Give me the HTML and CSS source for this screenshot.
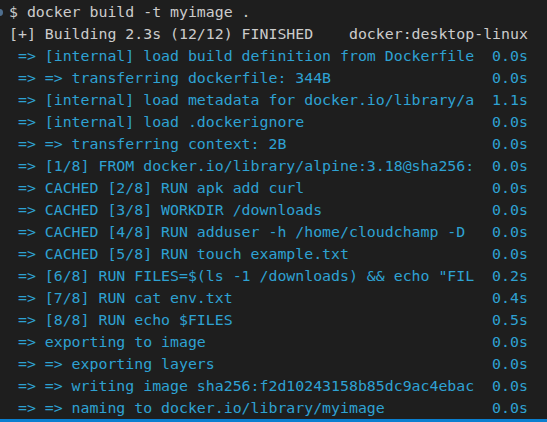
FILE: index.html
```html
<html>
<head>
    <link rel="stylesheet" href="styles.css">
</head>
<body>
    <main class="terminal">
        <div class="row prompt"><span class="msg">$ docker build -t myimage .</span></div>
        <div class="row plain"><span class="msg">[+] Building 2.3s (12/12) FINISHED    docker:desktop-linux</span></div>
        <div class="row"><span class="msg"> =&gt; [internal] load build definition from Dockerfile</span><span class="time">0.0s</span></div>
        <div class="row"><span class="msg"> =&gt; =&gt; transferring dockerfile: 344B</span><span class="time">0.0s</span></div>
        <div class="row"><span class="msg"> =&gt; [internal] load metadata for docker.io/library/a</span><span class="time">1.1s</span></div>
        <div class="row"><span class="msg"> =&gt; [internal] load .dockerignore</span><span class="time">0.0s</span></div>
        <div class="row"><span class="msg"> =&gt; =&gt; transferring context: 2B</span><span class="time">0.0s</span></div>
        <div class="row"><span class="msg"> =&gt; [1/8] FROM docker.io/library/alpine:3.18@sha256:</span><span class="time">0.0s</span></div>
        <div class="row"><span class="msg"> =&gt; CACHED [2/8] RUN apk add curl</span><span class="time">0.0s</span></div>
        <div class="row"><span class="msg"> =&gt; CACHED [3/8] WORKDIR /downloads</span><span class="time">0.0s</span></div>
        <div class="row"><span class="msg"> =&gt; CACHED [4/8] RUN adduser -h /home/cloudchamp -D</span><span class="time">0.0s</span></div>
        <div class="row"><span class="msg"> =&gt; CACHED [5/8] RUN touch example.txt</span><span class="time">0.0s</span></div>
        <div class="row"><span class="msg"> =&gt; [6/8] RUN FILES=$(ls -1 /downloads) &amp;&amp; echo "FIL</span><span class="time">0.2s</span></div>
        <div class="row"><span class="msg"> =&gt; [7/8] RUN cat env.txt</span><span class="time">0.4s</span></div>
        <div class="row"><span class="msg"> =&gt; [8/8] RUN echo $FILES</span><span class="time">0.5s</span></div>
        <div class="row"><span class="msg"> =&gt; exporting to image</span><span class="time">0.0s</span></div>
        <div class="row"><span class="msg"> =&gt; =&gt; exporting layers</span><span class="time">0.0s</span></div>
        <div class="row"><span class="msg"> =&gt; =&gt; writing image sha256:f2d10243158b85dc9ac4ebac</span><span class="time">0.0s</span></div>
        <div class="row"><span class="msg"> =&gt; =&gt; naming to docker.io/library/myimage</span><span class="time">0.0s</span></div>
    </main>
    <div class="status-edge"></div>
</body>
</html>
```

FILE: styles.css
```css
* {
    margin: 0;
    padding: 0;
    box-sizing: border-box;
}
html, body {
    height: 100%;
}
body {
    background-color: #1e1e1e;
    display: flex;
    flex-direction: column;
    overflow: hidden;
}
.terminal {
    flex: 1;
    padding: 1px 0 0 9px;
    font-family: "DejaVu Sans Mono", "Liberation Mono", monospace;
    font-size: 14.87px;
    line-height: 22px;
    color: #2ea2d3;
}
.row {
    display: flex;
    white-space: pre;
}
.msg {
    width: 54ch;
}
.prompt, .plain {
    color: #cccccc;
}
.prompt .msg, .plain .msg {
    width: auto;
}
.prompt {
    position: relative;
}
.prompt::before {
    content: "";
    position: absolute;
    left: -13px;
    top: 8px;
    width: 7px;
    height: 7px;
    border-radius: 50%;
    background: #4f6f8f;
}
.status-edge {
    height: 3px;
    background: #0a7fd0;
}
```
